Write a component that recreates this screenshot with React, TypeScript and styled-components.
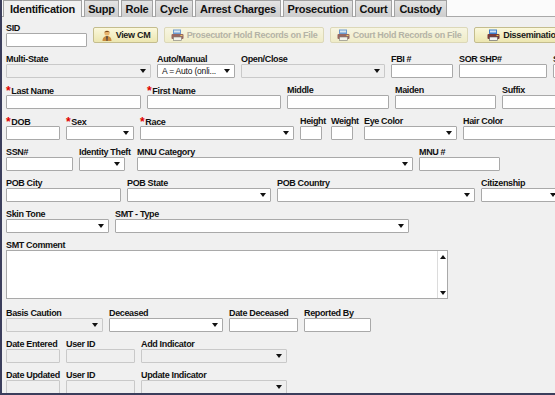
import React from 'react'
import styled, { createGlobalStyle, css } from 'styled-components'

const GlobalStyle = createGlobalStyle`
  html, body { margin:0; padding:0; background:#f0f0f0; }
  * { box-sizing:border-box; }
`

const font = `"Liberation Sans", Arial, sans-serif`

const tabs = [
  { title: 'Identification', w: 79 },
  { title: 'Supp', w: 35 },
  { title: 'Role', w: 32 },
  { title: 'Cycle', w: 38 },
  { title: 'Arrest Charges', w: 86 },
  { title: 'Prosecution', w: 70 },
  { title: 'Court', w: 37 },
  { title: 'Custody', w: 53 },
]

type Kind = 'input' | 'select' | 'area'

type FieldDef = {
  label: string,
  w: number,
  kind?: Kind,
  cw?: number,
  req?: boolean,
  off?: boolean,
  value?: string,
}

const rows: FieldDef[][] = [
  [
    { label: 'Multi-State', w: 145, kind: 'select', off: true },
    { label: 'Auto/Manual', w: 78, kind: 'select', value: 'A = Auto (onli...' },
    { label: 'Open/Close', w: 144, kind: 'select', off: true },
    { label: 'FBI #', w: 62 },
    { label: 'SOR SHP#', w: 88 },
    { label: 'SOR Status', w: 60 },
  ],
  [
    { label: 'Last Name', w: 135, req: true },
    { label: 'First Name', w: 134, req: true },
    { label: 'Middle', w: 102 },
    { label: 'Maiden', w: 101 },
    { label: 'Suffix', w: 60 },
  ],
  [
    { label: 'DOB', w: 54, req: true },
    { label: 'Sex', w: 68, kind: 'select', req: true },
    { label: 'Race', w: 154, kind: 'select', req: true },
    { label: 'Height', w: 25, cw: 22 },
    { label: 'Weight', w: 27, cw: 22 },
    { label: 'Eye Color', w: 93, kind: 'select' },
    { label: 'Hair Color', w: 100 },
  ],
  [
    { label: 'SSN#', w: 67 },
    { label: 'Identity Theft', w: 52, cw: 46, kind: 'select' },
    { label: 'MNU Category', w: 276, kind: 'select' },
    { label: 'MNU #', w: 81 },
  ],
  [
    { label: 'POB City', w: 115 },
    { label: 'POB State', w: 144, kind: 'select' },
    { label: 'POB Country', w: 198, kind: 'select' },
    { label: 'Citizenship', w: 80, kind: 'select' },
  ],
  [
    { label: 'Skin Tone', w: 103, kind: 'select' },
    { label: 'SMT - Type', w: 294, kind: 'select' },
  ],
  [
    { label: 'SMT Comment', w: 442, kind: 'area' },
  ],
  [
    { label: 'Basis Caution', w: 97, kind: 'select', off: true },
    { label: 'Deceased', w: 114, kind: 'select' },
    { label: 'Date Deceased', w: 69 },
    { label: 'Reported By', w: 67 },
  ],
  [
    { label: 'Date Entered', w: 54, off: true },
    { label: 'User ID', w: 69, off: true },
    { label: 'Add Indicator', w: 146, kind: 'select', off: true },
  ],
  [
    { label: 'Date Updated', w: 54, off: true },
    { label: 'User ID', w: 69, off: true },
    { label: 'Update Indicator', w: 146, kind: 'select', off: true },
  ],
]

export default function App() {
  return (
    <>
      <GlobalStyle />
      <Frame>
        <TabBar>
          {tabs.map((t, i) => <Tab key={t.title} $w={t.w} $active={i == 0}>{t.title}</Tab>)}
        </TabBar>

        <Form>
          <Row>
            <Field label='SID' w={81} />
            <Buttons>
              <Button $w={65}><PersonIcon />View CM</Button>
              <Button $w={160} $off><PrintIcon />Prosecutor Hold Records on File</Button>
              <Button $w={138} $off><PrintIcon />Court Hold Records on File</Button>
              <Button $w={100}><PrintIcon />Dissemination</Button>
            </Buttons>
          </Row>
          {rows.map((r, i) => (
            <Row key={i}>
              {r.map((f, j) => <Field key={j} {...f} />)}
            </Row>
          ))}
        </Form>
      </Frame>
    </>
  )
}

const Field = (p: FieldDef) => {
  const kind = p.kind || 'input'
  return (
    <FieldBox $w={p.w}>
      <Label>{p.req && <Star>*</Star>}{p.label}</Label>
      {kind == 'area'
        ? (
          <Area>
            <ScrollCol>
              <Arrow $up />
              <Arrow />
            </ScrollCol>
          </Area>
        )
        : (
          <Control $w={p.cw || p.w} $off={p.off}>
            <Value>{p.value}</Value>
            {kind == 'select' && <Arrow />}
          </Control>
        )}
    </FieldBox>
  )
}

const PersonIcon = () => (
  <svg width='12' height='12' viewBox='0 0 12 12'>
    <path d='M1.5 12 C1.5 8.5 3.5 7 6 7 C8.5 7 10.5 8.5 10.5 12 Z' fill='#c98a3c' />
    <path d='M5.2 7.2 L6.8 7.2 L6.4 12 L5.6 12 Z' fill='#3c3c46' />
    <circle cx='6' cy='4' r='2.6' fill='#e8b46c' />
    <path d='M3.4 3.6 C3.6 1.6 8.4 1.6 8.6 3.6 C7.6 2.8 4.4 2.8 3.4 3.6 Z' fill='#7a4a1c' />
  </svg>
)

const PrintIcon = () => (
  <svg width='13' height='12' viewBox='0 0 13 12'>
    <rect x='2' y='0.5' width='8' height='5' fill='#3f7fd0' />
    <rect x='3' y='1.5' width='6' height='2' fill='#cfe2f7' />
    <rect x='0.5' y='5' width='12' height='5' rx='1' fill='#7a3a3a' />
    <rect x='2.5' y='8' width='8' height='3.5' fill='#f4f4f4' stroke='#555' strokeWidth='0.6' />
    <rect x='9.5' y='6' width='2' height='1' fill='#e8c040' />
  </svg>
)

const Frame = styled.div`
  width:555px; height:395px; overflow:hidden; background:#f0f0f0;
  border-left:2px solid #3b3e5c; border-bottom:2px solid #3b3e5c;
  font-family:${font}; color:#111;
`

const TabBar = styled.div`
  display:flex; align-items:flex-end; height:17px; padding-left:1px; gap:2px;
  background:#fbfbfb; border-bottom:1px solid #a9a9a9;
`

const Tab = styled.div<{ $w: number, $active?: boolean }>`
  flex:none; width:${p => p.$w}px; height:17px; padding-top:2px; margin-bottom:-1px; text-align:center;
  font-size:11px; font-weight:bold; letter-spacing:-0.25px; line-height:13px; white-space:nowrap;
  border:1px solid #a2a2a2; border-bottom:none;
  background:linear-gradient(#e4e4e4, #cdcdcd);
  ${p => p.$active && css` background:#f0f0f0; `}
`

const Form = styled.div`
  display:flex; flex-direction:column; gap:7px; padding:6px 0 0 4px;
`

const Row = styled.div`
  display:flex; align-items:flex-start; gap:6px; white-space:nowrap;
`

const Buttons = styled.div`
  display:flex; gap:6px; margin-top:4px;
`

const Button = styled.div<{ $w: number, $off?: boolean }>`
  display:flex; align-items:center; justify-content:center; gap:3px; flex:none;
  width:${p => p.$w}px; height:16px; border-radius:2px;
  border:1px solid #c4bd8e; background:linear-gradient(#fbf8dc, #ece6b0);
  font-size:9px; font-weight:bold; letter-spacing:-0.3px; color:#1a1a1a;
  ${p => p.$off && css`
    border-color:#dcd8b8; background:linear-gradient(#f7f5e2, #efecc8); color:#b4b3a6;
    svg { opacity:0.75; }
  `}
`

const FieldBox = styled.div<{ $w: number }>`
  display:flex; flex-direction:column; flex:none; width:${p => p.$w}px;
`

const Label = styled.div`
  height:10px; line-height:10px; font-size:9px; font-weight:bold; letter-spacing:-0.35px;
  overflow:visible; white-space:nowrap;
`

const Star = styled.span`
  color:#e00000; font-size:12px; margin-right:1px; position:relative; top:1px;
`

const Control = styled.div<{ $w: number, $off?: boolean }>`
  position:relative; display:flex; align-items:center; width:${p => p.$w}px; height:14px;
  background:#fff; border:1px solid #a9a9a9; border-radius:1px; padding:0 4px;
  ${p => p.$off && css` background:#efefef; border-color:#c9c9c9; `}
`

const Value = styled.span`
  font-size:8.5px; letter-spacing:-0.2px; color:#111;
`

const Arrow = styled.span<{ $up?: boolean }>`
  margin-left:auto; width:0; height:0;
  border-left:3.5px solid transparent; border-right:3.5px solid transparent;
  ${p => p.$up
    ? css` border-bottom:4px solid #111; border-left-width:3px; border-right-width:3px; `
    : css` border-top:4px solid #111; `}
`

const Area = styled.div`
  display:flex; justify-content:flex-end; width:442px; height:49px; margin-bottom:2px;
  background:#fff; border:1px solid #a9a9a9;
`

const ScrollCol = styled.div`
  display:flex; flex-direction:column; justify-content:space-between; align-items:center;
  width:10px; padding:4px 0 3px; border-left:1px solid #dcdcdc;
  ${Arrow} { margin-left:0; }
`
